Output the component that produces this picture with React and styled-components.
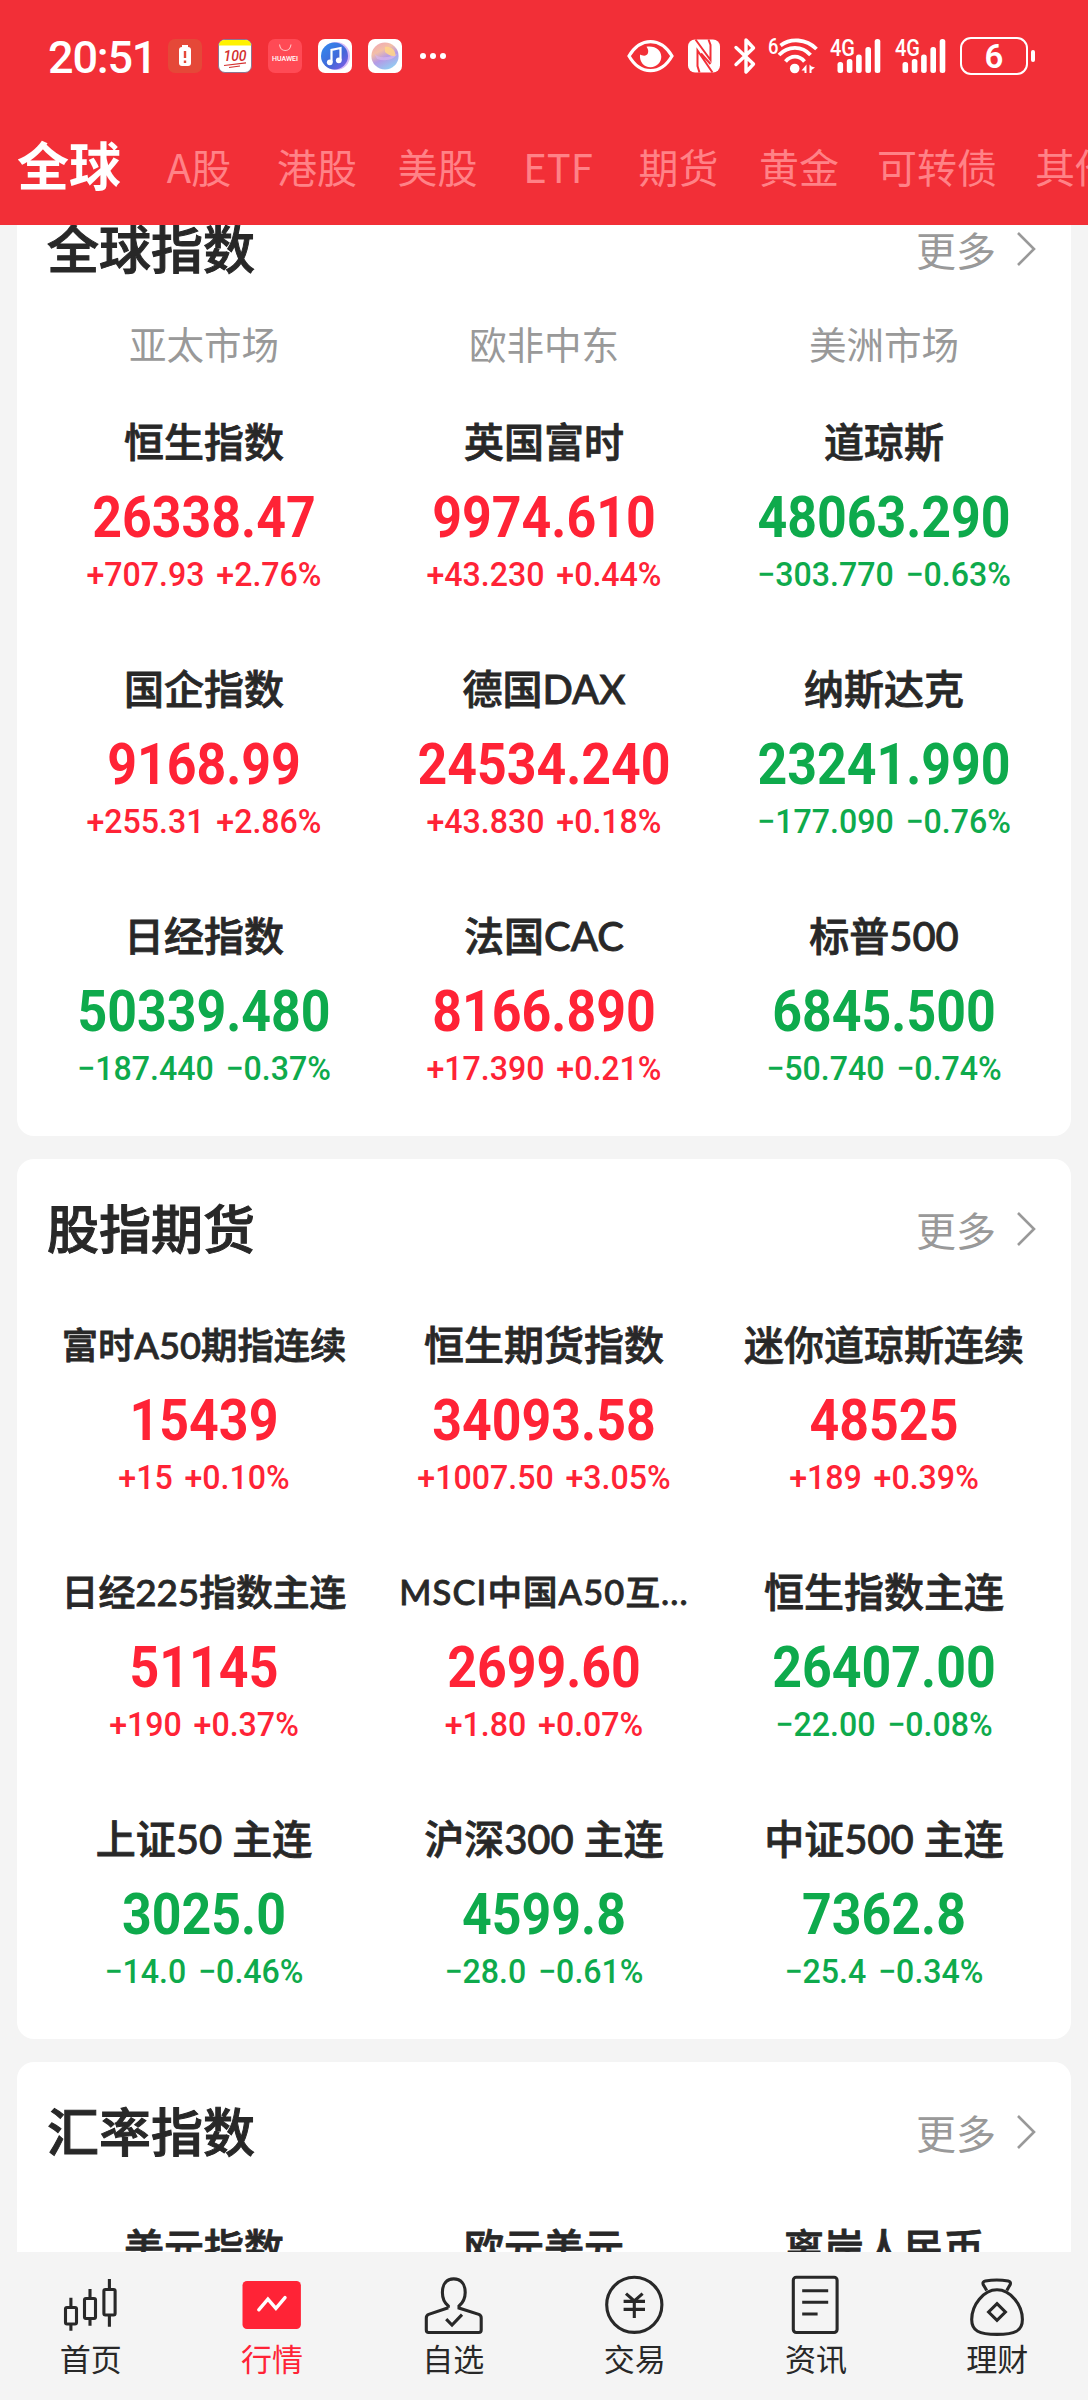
import React from "react";
import styled, { createGlobalStyle, css } from "styled-components";

const RED = "#ff2336";
const GREEN = "#0eaa4c";
const INK = "#282828";

const tabs = [
  { name: "全球", active: true },
  { name: "A股", width: 75 },
  { name: "港股" },
  { name: "美股" },
  { name: "ETF", width: 80 },
  { name: "期货" },
  { name: "黄金" },
  { name: "可转债", width: 115 },
  { name: "其他" },
];

const sections = [
  {
    title: "全球指数",
    markets: ["亚太市场", "欧非中东", "美洲市场"],
    items: [
      { name: "恒生指数", value: "26338.47", change: "+707.93 +2.76%" },
      { name: "英国富时", value: "9974.610", change: "+43.230 +0.44%" },
      { name: "道琼斯", value: "48063.290", change: "−303.770 −0.63%" },
      { name: "国企指数", value: "9168.99", change: "+255.31 +2.86%" },
      { name: "德国DAX", value: "24534.240", change: "+43.830 +0.18%" },
      { name: "纳斯达克", value: "23241.990", change: "−177.090 −0.76%" },
      { name: "日经指数", value: "50339.480", change: "−187.440 −0.37%" },
      { name: "法国CAC", value: "8166.890", change: "+17.390 +0.21%" },
      { name: "标普500", value: "6845.500", change: "−50.740 −0.74%" },
    ],
  },
  {
    title: "股指期货",
    items: [
      { name: "富时A50期指连续", value: "15439", change: "+15 +0.10%", size: 36.3 },
      { name: "恒生期货指数", value: "34093.58", change: "+1007.50 +3.05%" },
      { name: "迷你道琼斯连续", value: "48525", change: "+189 +0.39%" },
      { name: "日经225指数主连", value: "51145", change: "+190 +0.37%", size: 36.8 },
      { name: "MSCI中国A50互...", value: "2699.60", change: "+1.80 +0.07%", size: 34.5, spacing: 1.1 },
      { name: "恒生指数主连", value: "26407.00", change: "−22.00 −0.08%" },
      { name: "上证50 主连", value: "3025.0", change: "−14.0 −0.46%" },
      { name: "沪深300 主连", value: "4599.8", change: "−28.0 −0.61%" },
      { name: "中证500 主连", value: "7362.8", change: "−25.4 −0.34%" },
    ],
  },
  {
    title: "汇率指数",
    items: [{ name: "美元指数" }, { name: "欧元美元" }, { name: "离岸人民币" }],
  },
];

const HomeIcon = () => (
  <NavSvg>
    <rect x="5.5" y="32.5" width="11" height="16.5" rx="1.5" />
    <path d="M10.9 22.7V32M10.9 50v5.7" />
    <rect x="24.5" y="23.5" width="11" height="20" rx="1.5" />
    <path d="M30 14v9M30 44v6.7" />
    <rect x="43.9" y="14.5" width="11.2" height="25.5" rx="1.5" />
    <path d="M49.4 4v10M49.4 41v10.7" />
  </NavSvg>
);

const QuotesIcon = () => (
  <NavSvg>
    <rect x="1.5" y="6" width="58.4" height="48" rx="4.5" fill={RED} stroke="none" />
    <path d="M17.8 34.8L26.9 24.2L34.9 33.4L44 22.6" stroke="#fff" strokeWidth="3.4" strokeLinecap="round" />
  </NavSvg>
);

const WatchIcon = () => (
  <NavSvg>
    <path d="M25.3 32.8V31C21 27.5 19.4 23 19.4 17.5C19.4 9 23.6 3.9 30.7 3.9S42.2 9 42.2 17.5C42.2 23 40.3 27.5 36 31V33L55.8 39.4Q58.2 40.4 58.2 43V55Q58.2 57.5 55.8 57.5H5.7Q3.3 57.5 3.3 55V43Q3.3 40.4 5.7 39.4L25.3 32.8" />
    <path d="M23.2 44.2L29 50L39 39.6" />
  </NavSvg>
);

const TradeIcon = () => (
  <NavSvg>
    <circle cx="30.3" cy="29.8" r="27.6" />
    <path d="M22 18.6L30.3 26L38.6 18.6M19.6 26.4H41M19.6 34.4H41M30.3 26V43" />
  </NavSvg>
);

const NewsIcon = () => (
  <NavSvg>
    <rect x="8.3" y="2.3" width="43.8" height="55.2" rx="3" />
    <path d="M17.2 15.7H43.2M17.2 27.3H43.2M17.2 39H32.6" />
  </NavSvg>
);

const WealthIcon = () => (
  <NavSvg>
    <path d="M19.7 15.5L16.2 9.5Q15.2 6.6 18.3 6C25.5 4.7 34 4.7 41.2 6Q44.2 6.6 43.2 9.5L39.8 15.5" />
    <path d="M30 14.8C16.5 14.8 4.7 30 4.7 44.5C4.7 56 12 59.4 30 59.4S55.4 56 55.4 44.5C55.4 30 43.5 14.8 30 14.8Z" />
    <path d="M30 28.6L38.4 37L30 45.4L21.6 37Z" />
  </NavSvg>
);

const navItems = [
  { name: "首页", icon: HomeIcon },
  { name: "行情", icon: QuotesIcon, active: true },
  { name: "自选", icon: WatchIcon },
  { name: "交易", icon: TradeIcon },
  { name: "资讯", icon: NewsIcon },
  { name: "理财", icon: WealthIcon },
];

const Notifications = () => (
  <AppIcons>
    <svg width="34" height="34" viewBox="0 0 34 34">
      <rect width="34" height="34" rx="7" fill="#e54838" />
      <path d="M14 6h6v3h-6z" fill="#fff" />
      <rect x="11" y="8" width="12" height="19" rx="3" fill="#fff" />
      <path d="M17 12v7M17 21.5v2.5" stroke="#e54838" strokeWidth="2.4" />
    </svg>
    <svg width="34" height="34" viewBox="0 0 34 34">
      <rect x=".5" y=".5" width="33" height="33" rx="6.5" fill="#fff" stroke="#8c7590" />
      <path d="M1 6.5V6Q1.5 1 7 1H27Q32.5 1 33 6V6.5Z" fill="#fff200" />
      <text x="17" y="21.5" textAnchor="middle" fontFamily="Roboto, sans-serif" fontSize="14" fontStyle="italic" fontWeight="500" fill="#d3302f">
        100
      </text>
      <path d="M6 26.5L28 23.8M11 28.5L22 27" stroke="#d3302f" strokeWidth="1.2" />
    </svg>
    <svg width="34" height="34" viewBox="0 0 34 34">
      <rect width="34" height="34" rx="7" fill="#ff4a55" />
      <path d="M11.5 5.5C12.5 13.5 22 13.5 23 5.5" fill="none" stroke="#ffc4c4" strokeWidth="1.1" />
      <text x="4" y="22" fontFamily="Roboto, sans-serif" fontSize="6.6" fontWeight="500" fill="#fff" textLength="26" lengthAdjust="spacingAndGlyphs">
        HUAWEI
      </text>
    </svg>
    <svg width="34" height="34" viewBox="0 0 34 34">
      <defs>
        <linearGradient id="music" x1="0" y1="0" x2="1" y2="1">
          <stop offset="0" stopColor="#2f8df0" />
          <stop offset=".6" stopColor="#4467d8" />
          <stop offset="1" stopColor="#8a5be8" />
        </linearGradient>
      </defs>
      <rect width="34" height="34" rx="7" fill="#fff" />
      <circle cx="18" cy="17" r="14" fill="#d5b8f7" />
      <circle cx="16.5" cy="17" r="13.5" fill="url(#music)" />
      <path d="M13.5 23V11L22.5 9V21" fill="none" stroke="#fff" strokeWidth="2.2" />
      <circle cx="11.8" cy="23.3" r="2.9" fill="#fff" />
      <circle cx="20.8" cy="21.3" r="2.9" fill="#fff" />
    </svg>
    <svg width="34" height="34" viewBox="0 0 34 34">
      <defs>
        <linearGradient id="orb" x1=".2" y1="0" x2=".7" y2="1">
          <stop offset="0" stopColor="#f0a9b4" />
          <stop offset=".3" stopColor="#f3bfa6" />
          <stop offset=".58" stopColor="#b59ae6" />
          <stop offset="1" stopColor="#8fd0f3" />
        </linearGradient>
      </defs>
      <rect width="34" height="34" rx="7" fill="#fff" />
      <circle cx="17" cy="17" r="13.6" fill="url(#orb)" />
      <path d="M6 14C10 20 20 19 29 15C27 20 18 23 9 20Z" fill="#d9b6ee" opacity=".7" />
      <path d="M17 8C23 7 27.5 11 27.5 16.5C24 18 20 16 17 13Z" fill="#ffd58a" opacity=".9" />
    </svg>
    <svg width="30" height="34" viewBox="0 0 30 34" fill="#fff">
      <circle cx="5" cy="17" r="3" />
      <circle cx="15" cy="17" r="3" />
      <circle cx="25" cy="17" r="3" />
    </svg>
  </AppIcons>
);

const Signal = () => (
  <svg width="51" height="38" viewBox="0 0 51 38" fill="#fff">
    <text x="0" y="18.5" fontFamily="Roboto, sans-serif" fontSize="24" fontWeight="500" textLength="25" lengthAdjust="spacingAndGlyphs">
      4G
    </text>
    <rect x="7.5" y="25" width="5.6" height="11" rx="2.5" />
    <rect x="16.8" y="22" width="5.6" height="14" rx="2.5" />
    <rect x="26.1" y="17.5" width="5.6" height="18.5" rx="2.5" />
    <rect x="35.4" y="10" width="5.6" height="26" rx="2.5" />
    <rect x="44.7" y="2" width="5.6" height="34" rx="2.5" />
  </svg>
);

const SystemIcons = () => (
  <SystemRow>
    <svg width="47" height="38" viewBox="0 0 47 38">
      <path d="M2 19C8 9 15 4.6 23.5 4.6S39 9 45 19C39 29.5 32 33.6 23.5 33.6S8 29.5 2 19Z" fill="none" stroke="#fff" strokeWidth="3.2" />
      <path d="M19.5 9.8C22 13 21.5 16.5 19.8 17.8C17.5 19.5 15 18.5 13 17.5C12.3 25 17 30.2 23.5 30.2C29.8 30.2 34.3 25.5 34.3 19.8C34.3 13.5 28.5 8.5 19.5 9.8Z" fill="#fff" />
    </svg>
    <svg width="32" height="38" viewBox="0 0 32 38">
      <rect y="2.5" width="32" height="33" rx="7" fill="#fff" />
      <path d="M7.5 2.5L22.5 23V8L20.5 2.5M24.5 35.5L9.5 13.5V29L11.5 35.5M13 16.5L22.5 27" fill="none" stroke="#f22f37" strokeWidth="2" />
    </svg>
    <svg width="22" height="38" viewBox="0 0 22 38">
      <path d="M2 10.5L19.5 27L12 35V3L19.5 11L2 27.5" fill="none" stroke="#fff" strokeWidth="3.4" strokeLinejoin="round" strokeLinecap="round" />
    </svg>
    <WifiIcon viewBox="0 0 51 38">
      <text x="0" y="17" fontFamily="Roboto, sans-serif" fontSize="22" fontWeight="500" fill="#fff" textLength="10.5" lengthAdjust="spacingAndGlyphs">
        6
      </text>
      <g fill="none" stroke="#fff" strokeWidth="3.8">
        <path d="M12.5 8.5C22.5 1 38 1.5 48.5 12" />
        <path d="M11 18C20 8.5 34 8.5 42.5 18" />
        <path d="M17.5 24.5C23 18 31 18 36.5 24.5" />
      </g>
      <circle cx="26.7" cy="31.5" r="4.8" fill="#fff" />
      <path d="M38.5 27.5V36H36.5V33.5H33.5ZM41.5 27.5V36H43.5V33L47 30.5L43.5 29.5Z" fill="#fff" />
    </WifiIcon>
    <Signal />
    <Signal />
    <Battery>6</Battery>
  </SystemRow>
);

const Quote = ({ name, value, change, size, spacing }) => {
  const color = change && change.startsWith("+") ? RED : GREEN;
  return (
    <Cell>
      <Name $size={size} $spacing={spacing}>
        {name}
      </Name>
      {value && <Value $color={color}>{value}</Value>}
      {change && <Change $color={color}>{change}</Change>}
    </Cell>
  );
};

const Section = ({ title, markets, items }) => (
  <Card>
    <CardHeader>
      <Title>{title}</Title>
      <More>
        更多
        <svg width="20" height="36" viewBox="0 0 20 36">
          <path d="M2 2L18 18L2 34" fill="none" stroke="#999" strokeWidth="2.6" />
        </svg>
      </More>
    </CardHeader>
    {markets && (
      <Grid>
        {markets.map((market) => (
          <Market key={market}>{market}</Market>
        ))}
      </Grid>
    )}
    <Grid>
      {items.map((item) => (
        <Quote key={item.name} {...item} />
      ))}
    </Grid>
  </Card>
);

const App = () => {
  return (
    <Screen>
      <GlobalStyle />
      <Header>
        <StatusBar>
          <Time>20:51</Time>
          <Notifications />
          <SystemIcons />
        </StatusBar>
        <Tabs>
          {tabs.map(({ name, active, width }) => (
            <Tab key={name} $active={active} $width={width}>
              {name}
            </Tab>
          ))}
        </Tabs>
      </Header>
      <Content>
        <Feed>
          {sections.map((section) => (
            <Section key={section.title} {...section} />
          ))}
        </Feed>
      </Content>
      <Nav>
        {navItems.map(({ name, icon: Icon, active }) => (
          <NavItem key={name} $active={active}>
            <Icon />
            <NavLabel>{name}</NavLabel>
          </NavItem>
        ))}
      </Nav>
    </Screen>
  );
};

export default App;

const GlobalStyle = createGlobalStyle`
  * {
    box-sizing: border-box;
  }

  body {
    margin: 0;
    font-family: "Noto Sans CJK SC", sans-serif;
    color: ${INK};
  }

  svg {
    display: block;
    flex-shrink: 0;
    overflow: visible;
  }
`;

const Screen = styled.div`
  width: 1088px;
  height: 2400px;
  display: flex;
  flex-direction: column;
  overflow: hidden;
  background: #f4f4f4;
`;

const Header = styled.header`
  height: 225px;
  flex-shrink: 0;
  background: #f22f37;
  color: #fff;
`;

const StatusBar = styled.div`
  height: 112px;
  padding: 0 60px 0 48px;
  display: flex;
  align-items: center;
`;

const Time = styled.div`
  width: 120px;
  font-family: Roboto, sans-serif;
  font-size: 45px;
  font-weight: 500;
  letter-spacing: -1.2px;
  line-height: 50px;
  padding-top: 3px;
`;

const AppIcons = styled.div`
  display: flex;
  gap: 16px;
`;

const SystemRow = styled.div`
  margin-left: auto;
  display: flex;
  align-items: center;
  gap: 14px;
`;

const WifiIcon = styled.svg`
  width: 51px;
  height: 38px;
  margin: 0 -3px 0 -2px;
`;

const Battery = styled.div`
  position: relative;
  width: 68px;
  height: 38px;
  border: 2.5px solid #fff;
  border-radius: 11px;
  font-family: Roboto, sans-serif;
  font-size: 33px;
  font-weight: 600;
  line-height: 35px;
  text-align: center;

  &:after {
    content: "";
    position: absolute;
    width: 4px;
    height: 12px;
    border-radius: 2px;
    background: #fff;
    top: 11px;
    right: -9px;
  }
`;

const Tabs = styled.nav`
  display: flex;
  gap: 40.5px;
  padding-left: 17px;
  height: 107px;
  align-items: center;
`;

const Tab = styled.div`
  flex-shrink: 0;
  width: ${({ $width }) => ($width ? `${$width}px` : "auto")};
  display: flex;
  justify-content: center;
  white-space: nowrap;
  font-size: 40px;
  line-height: 60px;
  color: #ff8287;

  ${({ $active }) =>
    $active &&
    css`
      color: #fff;
      font-size: 52px;
      font-weight: 700;
      line-height: 56px;
      padding-bottom: 3px;
    `}
`;

const Content = styled.main`
  height: 2027px;
  overflow: hidden;
`;

/* the list is scrolled a little under the header */
const Feed = styled.div`
  margin-top: -46px;
  padding: 0 17px;
  display: flex;
  flex-direction: column;
  gap: 23px;
`;

const Card = styled.section`
  background: #fff;
  border-radius: 17px;
  padding: 0 17px;
`;

const CardHeader = styled.div`
  height: 139px;
  padding: 0 18px 0 13px;
  display: flex;
  justify-content: space-between;
`;

const Title = styled.h2`
  margin: 0;
  font-size: 52px;
  font-weight: 500;
  line-height: 135px;
  -webkit-text-stroke: 1px currentColor;
`;

const More = styled.div`
  display: flex;
  align-items: center;
  gap: 20px;
  height: 139px;
  color: #999;
  font-size: 40px;
  line-height: 58px;
`;

const Grid = styled.div`
  display: grid;
  grid-template-columns: repeat(3, 1fr);
`;

const Market = styled.div`
  height: 77px;
  text-align: center;
  font-size: 37.5px;
  line-height: 50px;
  color: #999;
`;

const Cell = styled.div`
  height: 247px;
  padding-top: 19px;
  text-align: center;
  white-space: nowrap;
`;

const Name = styled.div`
  font-family: Lato, "Noto Sans CJK SC", sans-serif;
  font-size: ${({ $size }) => $size || 40}px;
  font-weight: 500;
  line-height: 56px;
  letter-spacing: ${({ $spacing }) => $spacing || 0}px;
  -webkit-text-stroke: 0.8px currentColor;
`;

const Value = styled.div`
  margin-top: 18px;
  font-family: Roboto, sans-serif;
  font-size: 57px;
  font-weight: 700;
  line-height: 60px;
  color: ${({ $color }) => $color};
  transform: scaleX(0.91);
`;

const Change = styled.div`
  margin-top: 6px;
  font-family: Roboto, sans-serif;
  font-size: 34px;
  font-weight: 500;
  line-height: 40px;
  word-spacing: 4px;
  color: ${({ $color }) => $color};
  transform: scaleX(0.945);
`;

const Nav = styled.nav`
  height: 148px;
  flex-shrink: 0;
  padding-top: 23px;
  display: flex;
  background: #f4f4f4;
`;

const NavItem = styled.div`
  flex: 1;
  display: flex;
  flex-direction: column;
  align-items: center;
  color: ${({ $active }) => ($active ? RED : INK)};
`;

const NavLabel = styled.span`
  font-size: 31px;
  line-height: 44px;
`;

const NavSvg = styled.svg.attrs({ viewBox: "0 0 61 61" })`
  width: 61px;
  height: 61px;
  fill: none;
  stroke: ${INK};
  stroke-width: 3.1;
`;
